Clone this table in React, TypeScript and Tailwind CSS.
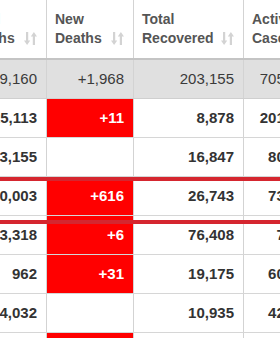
import React from "react";

type Row = {
  deaths: string;
  newDeaths: string;
  recovered: string;
  active: string;
};

const rows: Row[] = [
  { deaths: "25,113", newDeaths: "+11", recovered: "8,878", active: "201,352" },
  { deaths: "13,155", newDeaths: "", recovered: "16,847", active: "80,718" },
  { deaths: "20,003", newDeaths: "+616", recovered: "26,743", active: "73,271" },
  { deaths: "13,318", newDeaths: "+6", recovered: "76,408", active: "7,104" },
  { deaths: "962", newDeaths: "+31", recovered: "19,175", active: "60,623" },
  { deaths: "14,032", newDeaths: "", recovered: "10,935", active: "42,281" },
  { deaths: "4,171", newDeaths: "+99", recovered: "1,207", active: "31,640" },
];

const SortIcon = () => (
  <svg
    width="13"
    height="13"
    viewBox="0 0 13 13"
    fill="currentColor"
    className="mb-[3px] shrink-0 text-[#d3d3d3]"
  >
    <path d="M2 0h2.2v8.5h2L3.1 13 0 8.5h2z" />
    <path d="M9.9 0 13 4.5h-2V13H8.8V4.5h-2z" />
  </svg>
);

const HeaderCell = ({ label, width }: { label: [string, string]; width: string }) => (
  <div
    className={`${width} flex h-full shrink-0 items-end justify-between border-r border-[#d3d3d3] pb-[10px] pl-2 pr-[9px]`}
  >
    <span className="whitespace-nowrap text-[14px] font-bold leading-[19px] text-[#555]">
      {label[0]}
      <br />
      {label[1]}
    </span>
    <SortIcon />
  </div>
);

const ValueCell = ({
  value,
  width,
  red,
  total,
}: {
  value: string;
  width: string;
  red?: boolean;
  total?: boolean;
}) => (
  <div
    className={`${width} flex h-full shrink-0 items-center justify-end border-r border-[#d3d3d3] pr-[9px] text-[15px] ${
      total ? "font-normal text-[#3a3a3a]" : "font-bold text-[#333]"
    } ${red ? "bg-[#ff0000] text-white" : ""}`}
  >
    {value}
  </div>
);

export default function App() {
  return (
    <div className="relative h-[338px] w-[280px] overflow-hidden bg-white font-['Liberation_Sans',Arial,sans-serif]">
      <div className="ml-[-40px] w-max">
        <div className="flex h-[60px] border-b-2 border-[#c4c4c4]">
          <HeaderCell label={["Total", "Deaths"]} width="w-[87px]" />
          <HeaderCell label={["New", "Deaths"]} width="w-[87px]" />
          <HeaderCell label={["Total", "Recovered"]} width="w-[110px]" />
          <HeaderCell label={["Active", "Cases"]} width="w-[80px]" />
        </div>

        <div className="flex h-[39px] border-b border-[#cfcfcf] bg-[#e0e0e0]">
          <ValueCell total value="169,160" width="w-[87px]" />
          <ValueCell total value="+1,968" width="w-[87px]" />
          <ValueCell total value="203,155" width="w-[110px]" />
          <ValueCell total value="705,417" width="w-[80px]" />
        </div>

        {rows.map((r, i) => (
          <div key={i} className="flex h-[39px] border-b border-[#d6d6d6]">
            <ValueCell value={r.deaths} width="w-[87px]" />
            <ValueCell value={r.newDeaths} width="w-[87px]" red={r.newDeaths !== ""} />
            <ValueCell value={r.recovered} width="w-[110px]" />
            <ValueCell value={r.active} width="w-[80px]" />
          </div>
        ))}
      </div>

      {/* highlight box drawn over the selected row */}
      <div className="pointer-events-none absolute left-[-8px] right-[-8px] top-[177px] h-[47px] border-4 border-[#d5262f]" />
    </div>
  );
}
